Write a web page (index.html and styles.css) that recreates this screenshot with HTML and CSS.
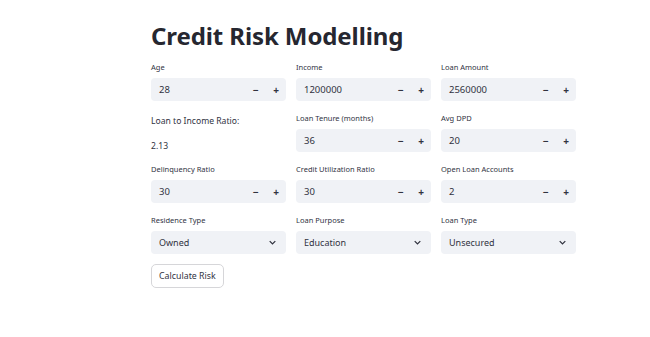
FILE: index.html
```html
<!DOCTYPE html>
<html>
<head>
<meta charset="utf-8">
<link rel="stylesheet" href="styles.css">
</head>
<body>
<main class="app">
  <h1 class="title">Credit Risk Modelling</h1>
  <div class="grid">
    <div class="field"><label class="label">Age</label><div class="num"><span class="val">28</span><span class="btns"><span class="btn">&minus;</span><span class="btn">+</span></span></div></div>
    <div class="field"><label class="label">Income</label><div class="num"><span class="val">1200000</span><span class="btns"><span class="btn">&minus;</span><span class="btn">+</span></span></div></div>
    <div class="field"><label class="label">Loan Amount</label><div class="num"><span class="val">2560000</span><span class="btns"><span class="btn">&minus;</span><span class="btn">+</span></span></div></div>

    <div class="field"><div class="ratio-label">Loan to Income Ratio:</div><div class="ratio-val">2.13</div></div>
    <div class="field"><label class="label">Loan Tenure (months)</label><div class="num"><span class="val">36</span><span class="btns"><span class="btn">&minus;</span><span class="btn">+</span></span></div></div>
    <div class="field"><label class="label">Avg DPD</label><div class="num"><span class="val">20</span><span class="btns"><span class="btn">&minus;</span><span class="btn">+</span></span></div></div>

    <div class="field"><label class="label">Delinquency Ratio</label><div class="num"><span class="val">30</span><span class="btns"><span class="btn">&minus;</span><span class="btn">+</span></span></div></div>
    <div class="field"><label class="label">Credit Utilization Ratio</label><div class="num"><span class="val">30</span><span class="btns"><span class="btn">&minus;</span><span class="btn">+</span></span></div></div>
    <div class="field"><label class="label">Open Loan Accounts</label><div class="num"><span class="val">2</span><span class="btns"><span class="btn">&minus;</span><span class="btn">+</span></span></div></div>

    <div class="field"><label class="label">Residence Type</label><div class="sel"><span class="val">Owned</span><svg class="chev" viewBox="0 0 10 6" width="7" height="5"><path d="M1 1l4 4 4-4" fill="none" stroke="#31333f" stroke-width="1.8"/></svg></div></div>
    <div class="field"><label class="label">Loan Purpose</label><div class="sel"><span class="val">Education</span><svg class="chev" viewBox="0 0 10 6" width="7" height="5"><path d="M1 1l4 4 4-4" fill="none" stroke="#31333f" stroke-width="1.8"/></svg></div></div>
    <div class="field"><label class="label">Loan Type</label><div class="sel"><span class="val">Unsecured</span><svg class="chev" viewBox="0 0 10 6" width="7" height="5"><path d="M1 1l4 4 4-4" fill="none" stroke="#31333f" stroke-width="1.8"/></svg></div></div>
  </div>
  <button class="calc">Calculate Risk</button>
</main>
</body>
</html>
```
FILE: styles.css
```css
html, body { margin: 0; padding: 0; background: #fff; }
body { font-family: "Source Sans Pro", "Noto Sans", sans-serif; color: #31333f; }
.app { width: 426px; padding: 19px 0 0 151px; }
.title { margin: 0; font-size: 24px; font-weight: 700; line-height: 34px; color: #262730; letter-spacing: -0.1px; }
.grid { display: grid; grid-template-columns: repeat(3, 135px); column-gap: 10px; row-gap: 12px; margin-top: 9px; }
.field { display: flex; flex-direction: column; }
.label { font-size: 7.5px; line-height: 10px; height: 10px; margin-bottom: 6px; color: #31333f; }
.num, .sel { height: 23px; background: #f0f2f6; border-radius: 4px; display: flex; align-items: center; padding-left: 8px; font-size: 9.5px; }
.sel .val { font-size: 9px; }
.val { flex: 1; }
.btns { display: flex; }
.btn { width: 20px; text-align: center; font-weight: 700; font-size: 10px; }
.sel { padding-right: 10px; }
.chev { display: block; }
.ratio-label { font-size: 8.6px; line-height: 12px; margin-top: 2px; }
.ratio-val { font-size: 8.6px; line-height: 12px; margin-top: 13px; }
.calc { margin-top: 10px; height: 24px; padding: 0 7px; font-family: inherit; font-size: 8.8px; color: #31333f; background: #fff; border: 1px solid #d6d6d9; border-radius: 5px; }
```
